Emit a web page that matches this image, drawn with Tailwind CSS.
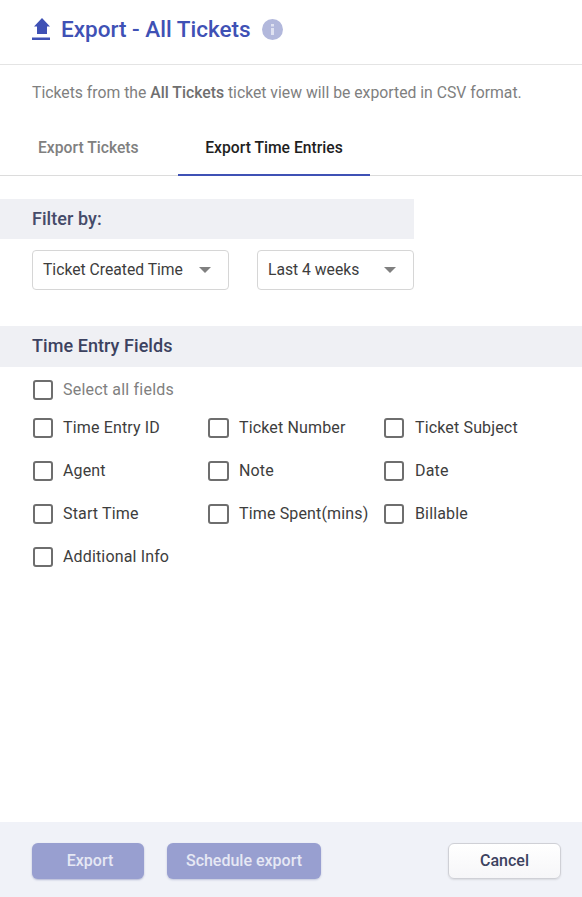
<!DOCTYPE html>
<html lang="en">
<head>
  <meta charset="UTF-8" />
  <title>Export - All Tickets</title>
  <script src="https://cdn.jsdelivr.net/npm/@tailwindcss/browser@4"></script>
</head>
<body class="bg-white font-['Roboto',sans-serif]">
  <div class="flex flex-col w-[582px] h-[897px] overflow-hidden">
    <!-- Header -->
    <div class="flex items-center h-[65px] pl-[31px] pb-[6px] border-b border-[#e4e4e4] shrink-0">
      <svg class="w-[20px] h-[23px]" viewBox="0 0 20 23"><path d="M11 0 L19 8.5 H16 V16 H6 V8.5 H3 Z M1 19.5 H19 V22 H1 Z" fill="#3f51b5"/></svg>
      <h1 class="ml-[10px] text-[22.5px] leading-[30px] font-medium text-[#3f51b5]">Export - All Tickets</h1>
      <span class="ml-[11px] w-[21px] h-[21px] rounded-full bg-[#b2b8dc] flex items-center justify-center">
        <svg class="w-[3px] h-[11px]" viewBox="0 0 3 11"><path d="M0 0H3V2.5H0Z M0 4H3V11H0Z" fill="#dfe2f1"/></svg>
      </span>
    </div>

    <p class="mt-[18px] pl-[32px] text-[15.75px] leading-[20px] text-[#808080] shrink-0">Tickets from the <b class="font-medium text-[#6f6f6f]">All Tickets</b> ticket view will be exported in CSV format.</p>

    <!-- Tabs -->
    <div class="flex h-[56px] mt-[17px] border-b border-[#dcdcdc] shrink-0 text-[15.7px]">
      <div class="w-[178px] pl-[38px] pt-[16px] font-medium text-[#808080]">Export Tickets</div>
      <div class="w-[192px] h-[56px] text-center pt-[16px] font-medium text-[#1f1f1f] border-b-2 border-[#3f51b5]">Export Time Entries</div>
    </div>

    <!-- Filter -->
    <div class="w-[414px] h-[40px] mt-[23px] pl-[32px] pb-[2px] flex items-center bg-[#eff0f4] text-[18px] tracking-[0.06px] font-medium text-[#454b69] shrink-0">Filter by:</div>
    <div class="flex gap-[28px] ml-[32px] mt-[11px] text-[15.7px] text-[#3d3d3d] shrink-0">
      <div class="w-[197px] h-[40px] pl-[10px] pr-[17px] flex items-center justify-between border border-[#d6d6d6] rounded-[4px]">
        <span>Ticket Created Time</span>
        <svg class="w-[12px] h-[6px]" viewBox="0 0 12 6"><path d="M0 0H12L6 6Z" fill="#808080"/></svg>
      </div>
      <div class="w-[157px] h-[40px] pl-[10px] pr-[17px] flex items-center justify-between border border-[#d6d6d6] rounded-[4px]">
        <span>Last 4 weeks</span>
        <svg class="w-[12px] h-[6px]" viewBox="0 0 12 6"><path d="M0 0H12L6 6Z" fill="#808080"/></svg>
      </div>
    </div>

    <!-- Fields -->
    <div class="h-[41px] mt-[36px] pl-[32px] pb-[2px] flex items-center bg-[#eff0f4] text-[18px] tracking-[0.06px] font-medium text-[#3c4260] shrink-0">Time Entry Fields</div>
    <label class="flex items-center h-[20px] mt-[13px] pl-[33px] text-[16px] tracking-[0.2px] text-[#808080] shrink-0">
      <span class="w-[20px] h-[20px] border-2 border-[#6e6e6e] rounded-[3px] mr-[10px]"></span>Select all fields
    </label>
    <div class="grid grid-cols-[175px_176px_auto] auto-rows-[43px] mt-[6px] pl-[33px] text-[16px] tracking-[0.15px] text-[#3d3d3d] flex-1">
      <label class="flex items-center h-[43px]"><span class="w-[20px] h-[20px] border-2 border-[#6e6e6e] rounded-[3px] mr-[10px] shrink-0"></span>Time Entry ID</label>
      <label class="flex items-center h-[43px]"><span class="w-[21px] h-[20px] border-2 border-[#6e6e6e] rounded-[3px] mr-[10px] shrink-0"></span>Ticket Number</label>
      <label class="flex items-center h-[43px]"><span class="w-[20px] h-[20px] border-2 border-[#6e6e6e] rounded-[3px] mr-[11px] shrink-0"></span>Ticket Subject</label>
      <label class="flex items-center h-[43px]"><span class="w-[20px] h-[20px] border-2 border-[#6e6e6e] rounded-[3px] mr-[10px] shrink-0"></span>Agent</label>
      <label class="flex items-center h-[43px]"><span class="w-[21px] h-[20px] border-2 border-[#6e6e6e] rounded-[3px] mr-[10px] shrink-0"></span>Note</label>
      <label class="flex items-center h-[43px]"><span class="w-[20px] h-[20px] border-2 border-[#6e6e6e] rounded-[3px] mr-[11px] shrink-0"></span>Date</label>
      <label class="flex items-center h-[43px]"><span class="w-[20px] h-[20px] border-2 border-[#6e6e6e] rounded-[3px] mr-[10px] shrink-0"></span>Start Time</label>
      <label class="flex items-center h-[43px]"><span class="w-[21px] h-[20px] border-2 border-[#6e6e6e] rounded-[3px] mr-[10px] shrink-0"></span>Time Spent(mins)</label>
      <label class="flex items-center h-[43px]"><span class="w-[20px] h-[20px] border-2 border-[#6e6e6e] rounded-[3px] mr-[11px] shrink-0"></span>Billable</label>
      <label class="flex items-center h-[43px]"><span class="w-[20px] h-[20px] border-2 border-[#6e6e6e] rounded-[3px] mr-[10px] shrink-0"></span>Additional Info</label>
    </div>

    <!-- Footer -->
    <div class="h-[75px] shrink-0 bg-[#f0f2f8] flex items-center pl-[32px] pr-[21px] pb-[1px] text-[16px] font-medium">
      <button class="w-[112px] h-[36px] mt-[3px] pl-[4px] rounded-[6px] bg-[#989fd0] text-[#e6e8f4] shadow-[0_1px_2px_rgba(60,70,140,0.35)]">Export</button>
      <button class="w-[154px] h-[36px] mt-[3px] ml-[23px] rounded-[6px] bg-[#989fd0] text-[#e6e8f4] shadow-[0_1px_2px_rgba(60,70,140,0.25)]">Schedule export</button>
      <button class="w-[113px] h-[36px] mt-[3px] ml-auto rounded-[6px] bg-gradient-to-b from-white to-[#f6f6f8] border border-[#cfd0d6] text-[#3c4260] shadow-[0_1px_2px_rgba(0,0,0,0.1)]">Cancel</button>
    </div>
  </div>
</body>
</html>
